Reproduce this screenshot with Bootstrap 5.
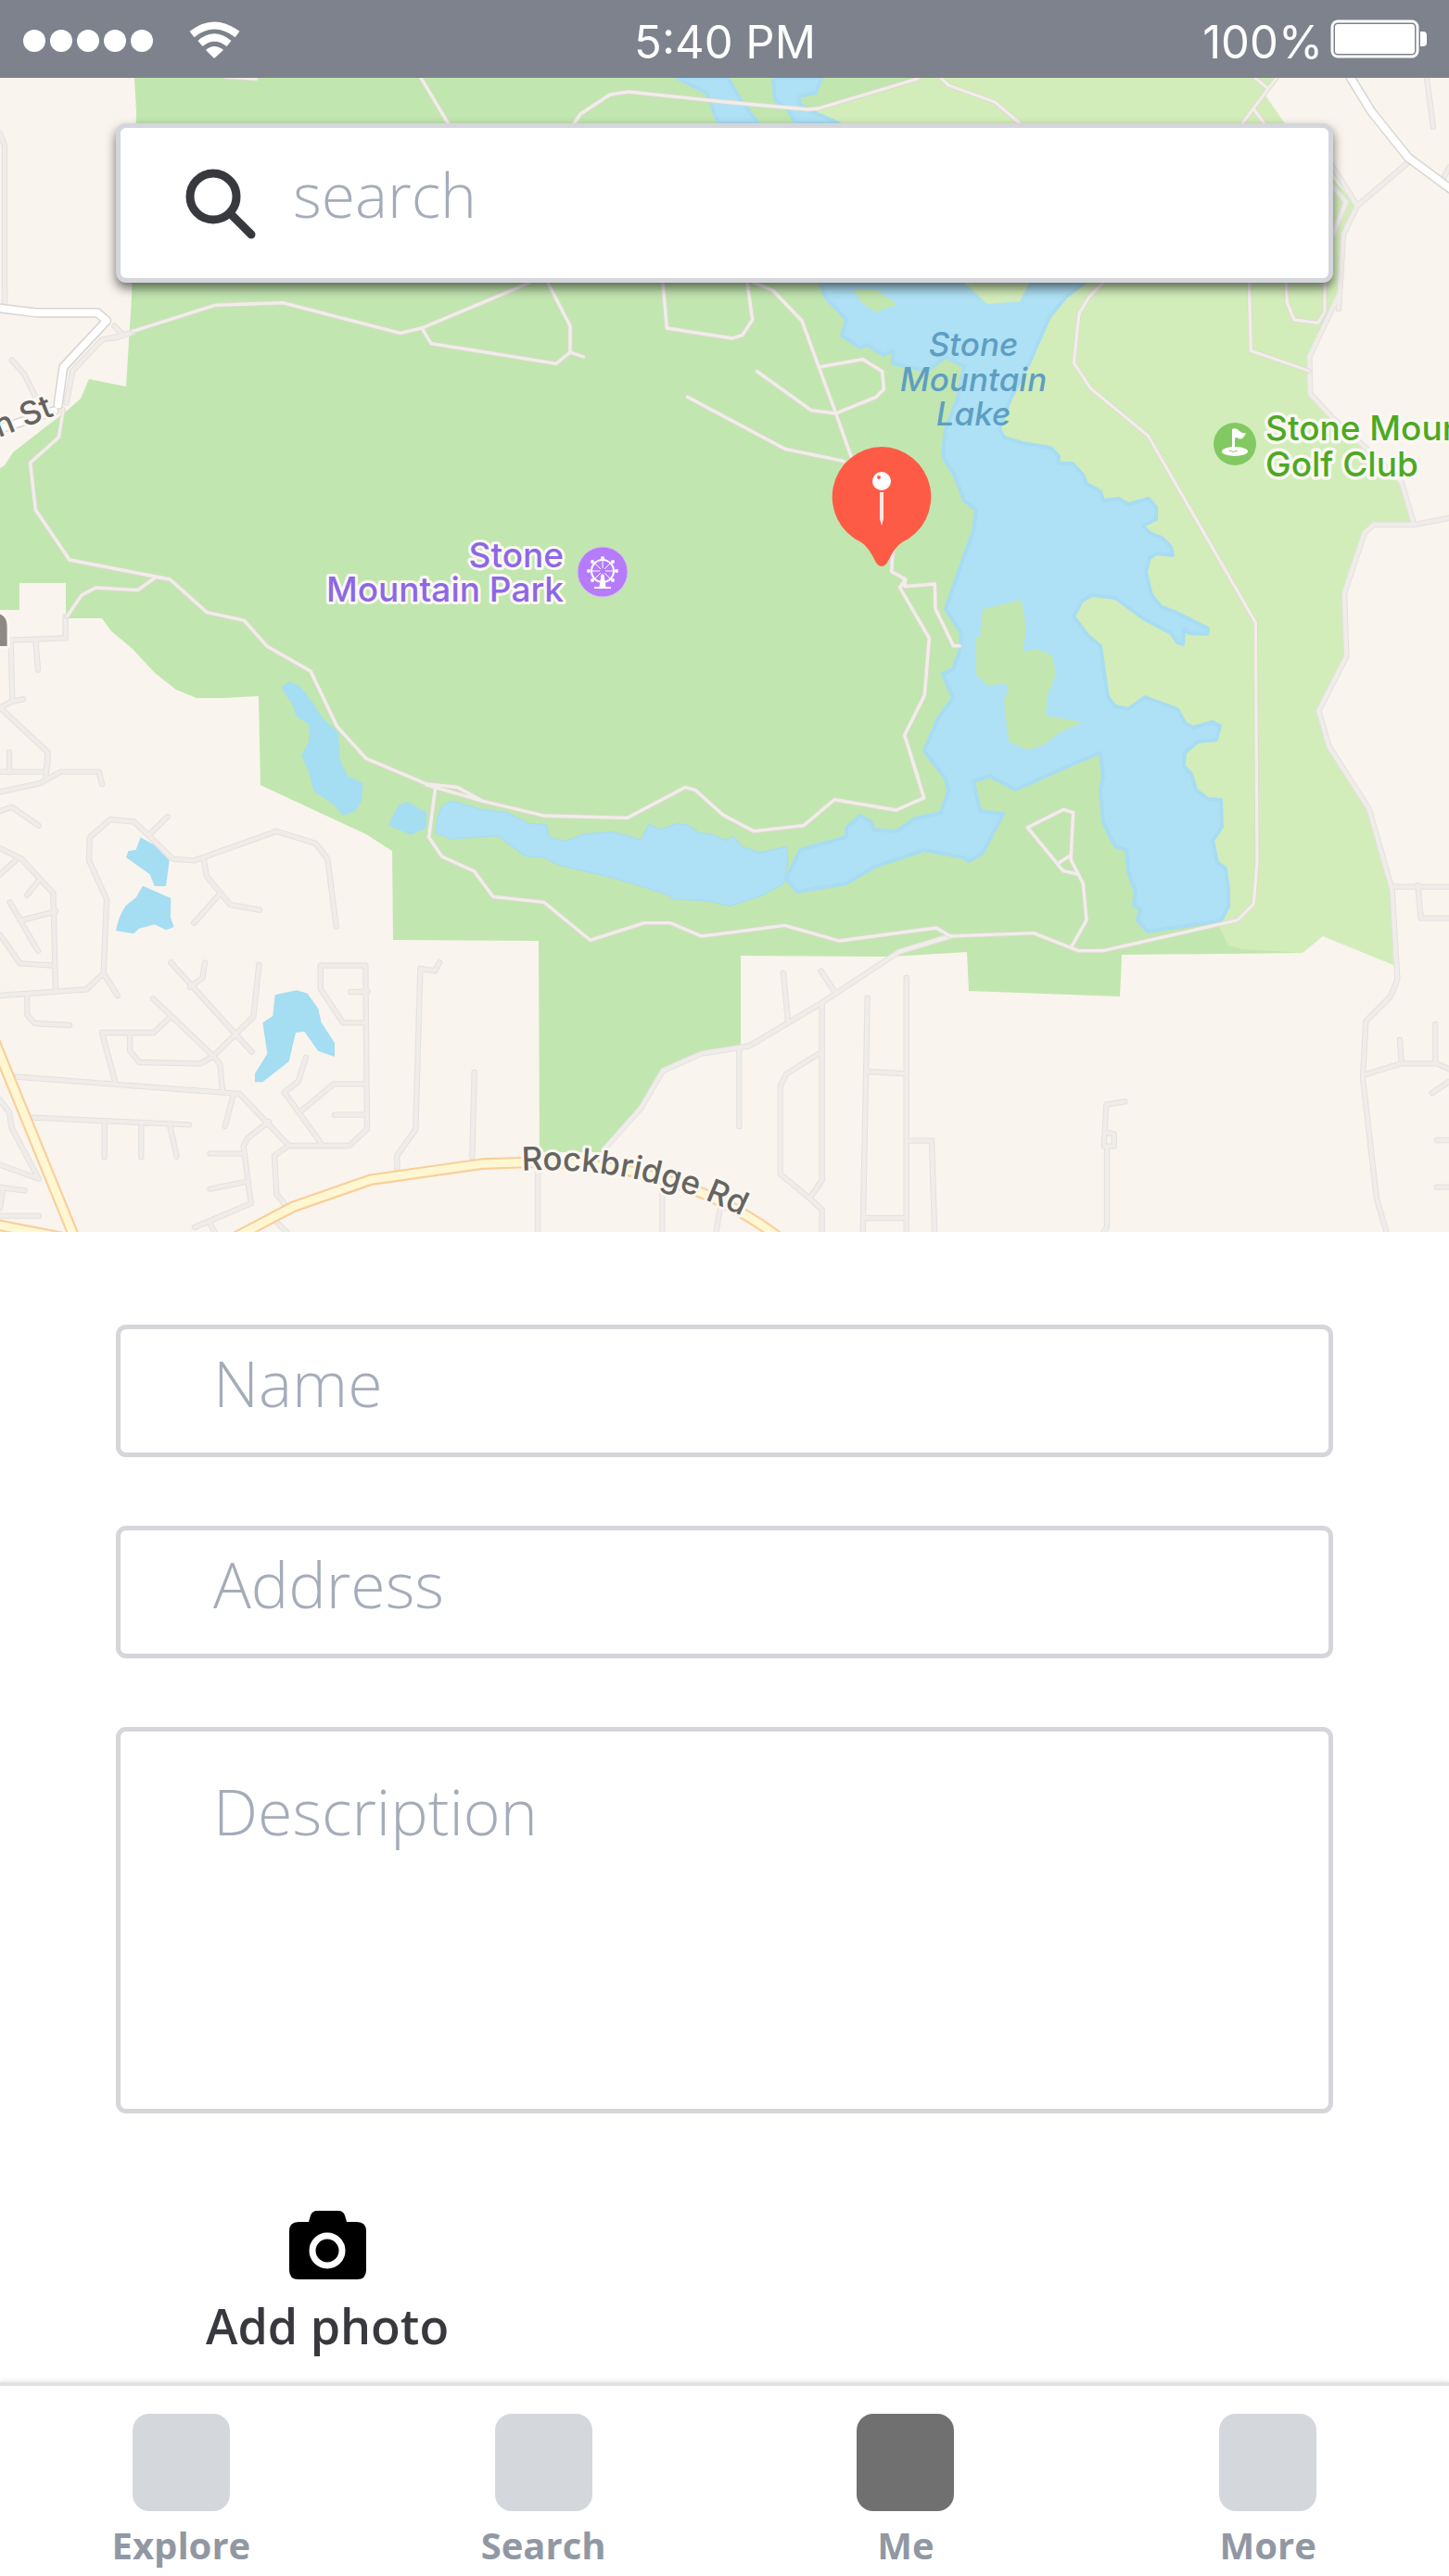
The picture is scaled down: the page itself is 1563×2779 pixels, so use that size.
<!DOCTYPE html>
<html lang="en">
<head>
<meta charset="utf-8">
<meta name="viewport" content="width=device-width, initial-scale=1">
<title>Add a place</title>
<link rel="stylesheet" href="https://cdn.jsdelivr.net/npm/bootstrap@5.3.0/dist/css/bootstrap.min.css">
<style>
  body { font-family: "Open Sans", "Noto Sans", sans-serif; color: #38393f; background: #fff; }
  .status-strip { height: 84px; background: #7d828c; color: #fff; font: 400 49px/76px Inter, Roboto, sans-serif; padding: 0 24px 0 25px; }
  .status-text { padding-top: 8px; }
  .status-side { flex: 1 1 0; }
  .map-view { background: #f9f4ed; }
  .map-view > svg { width: 100%; height: auto; }
  .side-gap { padding-left: 8%; padding-right: 8%; }
  .search-layer { top: 49px; left: 0; right: 0; }
  .search-box { height: 172px; background: #fff; border: 5px solid #d4d6db; border-radius: 11px; padding-left: 70px; gap: 39px; box-shadow: 0 6px 12px rgba(0,0,0,.55); }
  .entry { color: #38393f; font-weight: 300; font-size: 68px; line-height: 80px; border: 5px solid #d5d6da; border-radius: 11px; background: #fff; font-variant-ligatures: none; }
  .entry::placeholder { color: #a5acb9; opacity: 1; }
  .search-box .entry { font-size: 66px; border: 0; height: 162px; padding: 0 24px 21px 0; }
  .place-form { padding-top: 100px; padding-bottom: 31px; }
  .field-stack { gap: 74px; }
  .field-stack .entry { padding: 0 60px 18px 100px; height: 143px; }
  .field-stack textarea.entry { height: 417px; padding-top: 46px; resize: none; }
  .photo-btn { margin: 105px 0 0 97px; gap: 20px; font-weight: 600; font-size: 52px; line-height: 60px; color: #38393f; }
  .tab-strip { border-top: 4px solid #e1e1e1; box-shadow: 0 -2px 4px rgba(0,0,0,.08); padding: 30px 0 12px; }
  .tab-link { gap: 12px; font-weight: 700; font-size: 40px; line-height: 50px; color: #9198a3; text-decoration: none; }
  .tab-tile { width: 105px; height: 105px; border-radius: 18px; background: #d4d7dc; }
  .active .tab-tile { background: #707070; }

  .land { fill: #c2e6b0; }
  .golf { fill: #d2edba; }
  .water { fill: #aee1f5; stroke: #a8dcf3; stroke-width: 4; stroke-linejoin: round; }
  .pond { fill: #a5ddf2; }
  .ways { fill: none; stroke-linecap: round; stroke-linejoin: round; }
  .trail-a { stroke: #dfd8d0; stroke-width: 15; } .trail-b { stroke: #f1eeea; stroke-width: 10; }
  .lane-a { stroke: #e3e1de; stroke-width: 19; } .lane-b { stroke: #efece9; stroke-width: 13; }
  .main-a { stroke: #d8d5d2; stroke-width: 32; } .main-b { stroke: #fff; stroke-width: 23; }
  .hwy-a { stroke: #f9cf9b; stroke-width: 38; } .hwy-b { stroke: #fff7d2; stroke-width: 25; }
  .map-text { font-family: Inter, Roboto, sans-serif; font-weight: 500; paint-order: stroke; stroke-linejoin: round; }
</style>
</head>
<body>
<header class="status-strip d-flex align-items-center">
  <div class="status-side d-flex align-items-center">
    <svg width="240" height="44" viewBox="0 0 240 44" fill="#fff" role="img" aria-label="Signal and Wi-Fi">
      <circle cx="12" cy="24" r="12"/><circle cx="41" cy="24" r="12"/><circle cx="70" cy="24" r="12"/><circle cx="99" cy="24" r="12"/><circle cx="128" cy="24" r="12"/>
      <g fill="none" stroke="#fff" stroke-width="8"><path d="M182 17Q206-2 231 17"/><path d="M191 27Q206 14 222 27"/></g>
      <path d="M197 34Q206 26 216 34L206 43Z"/>
    </svg>
  </div>
  <div class="status-text">5:40 PM</div>
  <div class="status-side d-flex align-items-center justify-content-end gap-2">
    <span class="status-text">100%</span>
    <svg width="104" height="42" viewBox="0 0 104 42" fill="#fff" role="img" aria-label="Battery full"><rect x="2" y="2" width="92" height="38" rx="6" fill="none" stroke="#fff" stroke-width="3"/><rect x="5" y="5" width="86" height="32" rx="3"/><path d="M97 13h3q4 0 4 4v8q0 4-4 4h-3z"/></svg>
  </div>
</header>

<main>
<section class="map-view position-relative">
<svg class="d-block" viewBox="0 84 1563 1245" role="img" aria-label="Map of Stone Mountain Park">
  <defs>
    <g id="trails">
      <g transform="translate(0 320) scale(.33333)">
        <path d="M430 112L695 28 915 20 1295 118 1365 102 1560 20 1713-45M1365 102L1395 152 1560 178 1800 217 1845 180 1845 95 1773-45M1845 180L1888 195"/>
        <path d="M205 365L190 455 98 538 115 690 225 852 550 915 670 1022 790 1048 865 1132 1005 1212 1090 1390 1185 1495 1380 1577 1480 1588 1560 1632M550 915L505 908 445 950 310 942 265 965 217 1035"/>
      </g>
      <g transform="translate(520 320) scale(.33333)">
        <path d="M585-45L598 102 810 135 842 125 875 75 858-45M880-45L940-21 1035 78 1090 228 1145 378 1195 520M1090 228L1232 203 1295 242 1300 300 1275 325 1145 378 1065 368 890 242M665 325L980 493 1170 532M1330 810L1325 890 1370 915 1368 938 1465 930 1467 1010 1525 1130 1545 1130M1370 915L1352 942 1447 1105 1432 1290 1367 1420 1412 1560"/>
      </g>
      <g transform="translate(1040 320) scale(.33333)">
        <path d="M450-45L405 0 372 55 355 215 410 298 595 450 943 1055 948 1830 937 1965 885 2018 450 2117 370 2117 225 2060 0 2068"/>
        <path d="M922-45L928 175 1115 240M1042-45L1045 20 1068 75 1145 85 1167 50 1167-45"/>
        <path d="M205 1718L322 1660 353 1670 345 1822 385 1900 396 2018 347 2105M205 1718L320 1858 370 1870M310 1830L342 1810"/>
      </g>
      <g transform="translate(520 820) scale(.33333)">
        <path d="M-180 80L0 132 200 180 470 187 658 88 690 97 780 178 880 230 1040 212 1140 128 1340 162 1430 122 1392 0"/>
        <path d="M-150 80L-172 250-130 312-25 360 35 442 200 460 350 583 525 527 610 527 710 570 980 535 1155 585 1470 543 1515 570 1560 568"/>
      </g>
      <g transform="translate(0 84) scale(.33333)"><path d="M1362 0L1458 160M1850 160L1878 117 1974 54 2034 45 2346 78 2613 102 2649 99 2970 3M3045 0L3069 24 3219 78 3315 160M4062 0L4101 33M4131 0L4056 99 4011 160M4056 99L4100 160M730-3L830 3"/></g>
    </g>
    <g id="lanes">
      <g transform="translate(0 320) scale(.33333)">
        <path d="M38 205L78 250 118 330M15 20V-20M370 95L400 125 330 140 235 240 215 345M430 115L370 135M212 1035L212 1105 35 1112 40 1310 75 1303M115 1112L123 1208M40 1310L0 1330 155 1475 148 1555M30 1475V1540"/>
      </g>
      <g transform="translate(0 820) scale(.33333)">
        <path d="M-10 38H150L155 0M0 103L130 75 195 38H320L330 78M0 165L38 152 125 212M0 285L70 320 172 430 180 745M50 325L0 370M125 390L88 437M32 460L123 618M70 518L180 490M0 565L65 658 175 665M0 762L280 742 335 690 345 450 288 325 290 250 357 192 435 200 560 320 630 325 895 230 1022 270 1060 320 1088 538M485 240L542 183M335 690L380 762M88 755V825L112 852 225 858M660 325L668 375 745 468 840 485M712 432L628 527"/>
        <path d="M553 655L815 945M663 655L655 705 615 735M838 662L820 830 690 958 650 982 450 978 420 940V885M495 772L690 958 712 985 720 1070M552 830L498 882H330L372 1040M55 1025L775 1080 935 1248 1130 1248 1188 1195 1183 665H1037V740L1110 850H1183M1135 750H1190M990 962L965 1040 920 1075 1040 1242M975 1135L1080 1048H1183M1083 1148H1183M755 1085L728 1185M870 1170L800 1225 788 1250 812 1435 630 1512M680 1273H788M680 1388L795 1365M680 1500L700 1540M935 1248L888 1280 895 1405 940 1460M105 1157L612 1180M338 1178V1285M457 1180V1285M550 1185L572 1283M1422 655L1408 682 1360 675 1345 1195 1285 1280V1320M1535 1010L1528 1285M0 1100L30 1140 38 1190 125 1355 0 1310M80 1393L0 1383M10 1383L0 1450M0 1475H125M890 1490L940 1540"/>
      </g>
      <g transform="translate(520 820) scale(.33333)">
        <path d="M1515 570L1350 620 1100 785 865 925 710 950 585 1005 515 1125 395 1260M832 935V1185M975 690L990 845M1097 683L1145 755M1100 790V1360L1060 1418 965 1340V1055L985 1015 1090 950M1060 1418L1100 1455V1540M1247 770L1232 1540M1373 705V1540M1250 1008L1373 1015M1378 1232H1455L1465 1540M1240 1482H1373M180 1330V1540M583 1390V1540M770 1455L755 1540"/>
      </g>
      <g transform="translate(1040 320) scale(.33333)">
        <path d="M1210 0L1117 195 1120 315 1190 390 1300 490 1415 600 1455 735M1575 715L1460 738 1325 738 1295 765 1230 960 1237 1165 1147 1340 1180 1455 1310 1658 1385 1920 1402 2210 1380 2265 1300 2345 1290 2530 1335 2920 1370 3040"/>
      </g>
      <g transform="translate(1040 820) scale(.33333)">
        <path d="M1385 410H1570M1468 405L1478 512H1570M1300 1017L1415 982H1530L1570 1000M1410 905L1415 980M1525 855V980M1570 1040L1515 1077M520 1105L460 1115 452 1250 485 1250V1210L460 1205M462 1260V1510L445 1540M1530 1230H1570M1530 1382H1570"/>
      </g>
      <g transform="translate(781 84) scale(.33333)"><path d="M2274 0L2295 159M2208 279L2049 414 2004 507 1989 747M1965 280L2049 414M1960 340L2013 402 1970 507M2346 290L2325 330"/></g>
      <g transform="translate(0 84) scale(.33333)"><path d="M0 180L15 220V720"/></g>
    </g>
    <g id="mains">
      <g transform="translate(0 320) scale(.33333)"><path d="M-20 35L115 52H315L345 78 205 228 188 350M-20 435L175 370"/></g>
      <g transform="translate(781 84) scale(.33333)"><path d="M2022-20L2028 0 2094 108 2214 258 2360 366"/></g>
    </g>
    <g id="highways" transform="translate(0 820) scale(.33333)">
      <path d="M-30 880L245 1555M-30 1500L200 1545M760 1545L950 1445 1200 1358 1560 1307 1700 1302Q2200 1290 2540 1560"/>
    </g>
    <path id="rock-line" d="M563 1263Q695 1256 812 1318"/>
  </defs>

  <rect y="84" width="1563" height="1245" fill="#f9f4ed"/>
  <path class="land" d="M145 84L147 120 142 320 136 417 96 409 87 430 70 445 50 460 14 488 5 502 0 505V658H21V629H71V667H110L120 681 143 700 167 726 190 744 212 753H240L279 751 281 847 395 900 423 918 424 1014 581 1015 582 1243H650L692 1193 715 1154 757 1136 799 1129V1031L960 1032 1043 1027 1045 1069 1208 1075 1210 1030 1405 1028 1360 900V84Z"/>
  <path class="golf" d="M985 84L880 120 1150 300 1070 450 1100 600 1150 640 1150 700 1185 790 1230 850 1270 960 1313 995 1325 1020 1340 1024 1405 1028 1427 1010 1503 1041 1500 960 1477 873 1453 840 1433 805 1422 768 1452 708 1450 640 1470 573 1480 566 1523 565 1510 520 1473 483 1440 452 1413 427V387L1445 320 1447 260 1464 222 1438 193 1385 132 1365 103 1380 84Z"/>
  <path class="water" d="M885 305L890 320 913 345 908 362 928 375 935 372 953 383 963 378 963 392 1000 400 1020 385 1040 395 1033 430 1020 463 1017 492 1030 513 1040 540 1053 550 1050 573 1040 600 1020 657 1037 683 1035 703 1028 722 1017 727 1028 753 1012 775 997 810 1020 840 1023 853 1015 877 987 883 967 897 942 895 940 887 928 880 913 893V903L863 917 848 948 860 962 913 953 943 935 997 917 1040 925 1045 929 1060 920 1082 878 1057 875 1050 843 1068 837 1095 852 1167 820 1187 812 1190 837 1187 852 1190 887 1203 913 1215 917 1217 940 1225 963 1223 977 1230 980 1227 993 1238 1005 1317 993 1325 978V960L1322 937 1313 930 1308 907 1318 892 1317 863 1303 862 1290 852 1285 835 1277 827 1278 812 1292 800 1312 798 1316 783 1308 779 1287 785 1278 780 1270 765 1235 752 1217 765 1203 762 1195 752 1187 697 1173 685 1158 665 1167 648 1178 642 1203 645 1233 667 1263 683 1270 693 1276 695 1277 678 1283 683 1302 684 1303 678 1267 660 1253 655 1242 642 1236 617 1240 602 1247 597 1265 599 1263 590 1253 580 1240 575 1233 567 1247 560V547L1239 538 1217 544 1207 538 1190 540 1187 530 1172 522 1168 512 1157 500H1142V492L1133 483 1103 478 1083 472 1078 463 1090 430 1110 392 1132 342 1150 320 1170 305Z"/>
  <path class="land" d="M1060 657L1070 655 1100 647 1103 653 1107 680 1103 703 1118 700 1135 707 1139 727 1130 750 1128 772 1168 779 1143 790 1127 803 1108 809 1088 800 1083 757 1088 742 1083 737 1065 740 1053 727 1052 688 1057 687ZM920 312L945 313 968 328 945 337 930 327Z"/>
  <path class="golf" d="M1040 305H1110L1100 325 1065 328Z"/>
  <path class="water" d="M730 84L762 100 775 133H818L800 110 785 84ZM834 84H886L880 100 862 104V112L875 120 905 133H858L850 118 836 108Z"/>
  <g transform="translate(0 320) scale(.33333)"><path class="pond" d="M910 1265L935 1245 970 1260 1010 1310 1045 1365 1095 1410 1100 1500 1125 1550 1175 1575 1170 1630 1150 1665 1110 1680 1080 1645 1015 1600 1000 1540 975 1485 1000 1440V1385L960 1360 945 1320Z"/></g>
  <g transform="translate(0 820) scale(.33333)" class="pond"><path d="M455 250L500 275 548 325 537 408H500L485 370 408 315 415 295 440 290ZM462 407L553 447 552 510 563 540 537 550 500 532 450 545 432 562 375 552Q385 500 408 470L440 445ZM890 760L960 745 995 755 1030 805 1040 850 1083 915V960L1030 942 985 878 957 882 935 975 850 1042H825V1015L865 950 850 850 883 828ZM1255 210L1290 145 1320 135 1380 170V220L1330 242Z"/></g>
  <g transform="translate(520 820) scale(.33333)"><path class="water" stroke-width="10" d="M-145 190L-130 150-100 132 0 160 80 170 150 205 210 210 215 250 270 262 330 240 420 232 515 258 540 208 580 225 630 205 665 210 700 235 740 240 790 260 815 248 840 280 900 300 985 280 990 330 975 400 900 440 800 472 730 455 620 450 600 435 520 410 420 380 250 340 200 315 140 310 50 245-100 255-150 235Z"/></g>

  <g class="ways">
    <use href="#lanes" class="lane-a"/><use href="#lanes" class="lane-b"/>
    <use href="#trails" class="trail-a"/><use href="#trails" class="trail-b"/>
    <use href="#mains" class="main-a"/><use href="#mains" class="main-b"/>
    <use href="#highways" class="hwy-a"/><use href="#highways" class="hwy-b"/>
  </g>

  <g class="map-text" font-size="36">
    <g fill="#5e9ec2" font-style="italic" text-anchor="middle" font-size="35">
      <text x="1050" y="384">Stone</text><text x="1050" y="422">Mountain</text><text x="1050" y="459">Lake</text>
    </g>
    <g fill="#8c68e6" stroke="#fbf8f4" stroke-width="6" text-anchor="end" font-size="37">
      <text x="608" y="612">Stone</text><text x="608" y="649">Mountain Park</text>
    </g>
    <g fill="#4da922" stroke="#fbf8f4" stroke-width="7" font-size="37">
      <text x="1365" y="475">Stone Mountain</text><text x="1365" y="514">Golf Club</text>
    </g>
    <g fill="#666460" stroke="#fbf7f2" stroke-width="6">
      <text font-size="35"><textPath href="#rock-line">Rockbridge Rd</textPath></text>
      <text transform="translate(59 448) rotate(-22)" text-anchor="end" font-size="35">n St</text>
      <text x="12" y="697" text-anchor="end" font-size="64" font-weight="600" fill="#8d8984">n</text>
    </g>
  </g>

  <!-- ferris wheel -->
  <g transform="translate(650 617)">
    <circle r="27" fill="#b57bfb" stroke="#d5c0ea" stroke-width="1"/>
    <g fill="none" stroke="#fff"><circle cy="-1" r="12" stroke-width="2"/><path stroke-width="1" d="M0-12V10M-11-1H11M-8-9L8 7M8-9L-8 7"/><path stroke-width="2" d="M-9 17H9"/><path d="M-1 3L-3 16H3L1 3" fill="#fff"/></g>
    <circle cy="-1" r="3" fill="#b57bfb"/>
    <g fill="#fff"><circle cy="-15" r="2"/><circle cx="-15" cy="-1" r="2"/><circle cx="15" cy="-1" r="2"/><circle cx="-11" cy="-11" r="2"/><circle cx="11" cy="-11" r="2"/><circle cx="-11" cy="9" r="2"/><circle cx="11" cy="9" r="2"/></g>
  </g>
  <!-- golf flag -->
  <g transform="translate(1332 479)">
    <circle r="23" fill="#82c962"/>
    <ellipse cy="8" rx="14" ry="5" fill="#fff"/><path d="M-3 7V-16Q2-18 5-14 8-11 12-12 9-4 4-6 1-8 0-6V7Z" fill="#fff"/><path d="M-6 7Q-2 10 3 7" fill="none" stroke="#82c962" stroke-width="1"/>
  </g>
  <!-- pin -->
  <path d="M951 482A54 54 0 0 1 973 585Q965 590 957 607 951 615 945 607 937 590 929 585A54 54 0 0 1 951 482Z" fill="#fe5b47"/>
  <circle cx="951" cy="519" r="10" fill="#fff"/><circle cx="948" cy="515" r="2" fill="#fe5b47"/><path d="M949 531H953V560L951 567 949 560Z" fill="#fff" opacity=".85"/>
</svg>

  <div class="search-layer position-absolute side-gap">
    <form class="search-box d-flex align-items-center" role="search">
      <svg class="flex-shrink-0" width="77" height="77" viewBox="0 0 77 77" fill="none" stroke="#38393f" role="img" aria-label="Search"><circle cx="30" cy="31" r="25" stroke-width="9"/><path d="M49 50L71 72" stroke-width="9" stroke-linecap="round"/></svg>
      <label class="visually-hidden" for="search">Search places</label>
      <input id="search" class="entry flex-grow-1 w-100" type="text" placeholder="search">
    </form>
  </div>
</section>

<form class="place-form side-gap">
  <div class="field-stack d-flex flex-column">
    <div class="d-flex"><label class="visually-hidden" for="name">Name</label><input id="name" class="entry w-100" type="text" placeholder="Name"></div>
    <div class="d-flex"><label class="visually-hidden" for="address">Address</label><input id="address" class="entry w-100" type="text" placeholder="Address"></div>
    <div class="d-flex"><label class="visually-hidden" for="description">Description</label><textarea id="description" class="entry w-100" placeholder="Description"></textarea></div>
  </div>
  <button type="button" class="photo-btn btn border-0 p-0 d-inline-flex flex-column align-items-center">
    <svg width="83" height="74" viewBox="0 0 83 74" aria-hidden="true"><path d="M10 12H21L23 5Q25 0 30 0H53Q58 0 60 5L62 12H73Q83 12 83 22V64Q83 74 73 74H10Q0 74 0 64V22Q0 12 10 12Z"/><circle cx="41" cy="43" r="16" fill="#000" stroke="#fff" stroke-width="7"/></svg>
    <span>Add photo</span>
  </button>
</form>
</main>

<nav class="tab-strip bg-white" aria-label="Main">
  <div class="row g-0">
    <div class="col-3"><a class="tab-link d-flex flex-column align-items-center" href="#"><span class="tab-tile"></span>Explore</a></div>
    <div class="col-3"><a class="tab-link d-flex flex-column align-items-center" href="#"><span class="tab-tile"></span>Search</a></div>
    <div class="col-3"><a class="tab-link active d-flex flex-column align-items-center" href="#" aria-current="page"><span class="tab-tile"></span>Me</a></div>
    <div class="col-3"><a class="tab-link d-flex flex-column align-items-center" href="#"><span class="tab-tile"></span>More</a></div>
  </div>
</nav>
<script src="https://cdn.jsdelivr.net/npm/bootstrap@5.3.0/dist/js/bootstrap.bundle.min.js"></script>
</body>
</html>
